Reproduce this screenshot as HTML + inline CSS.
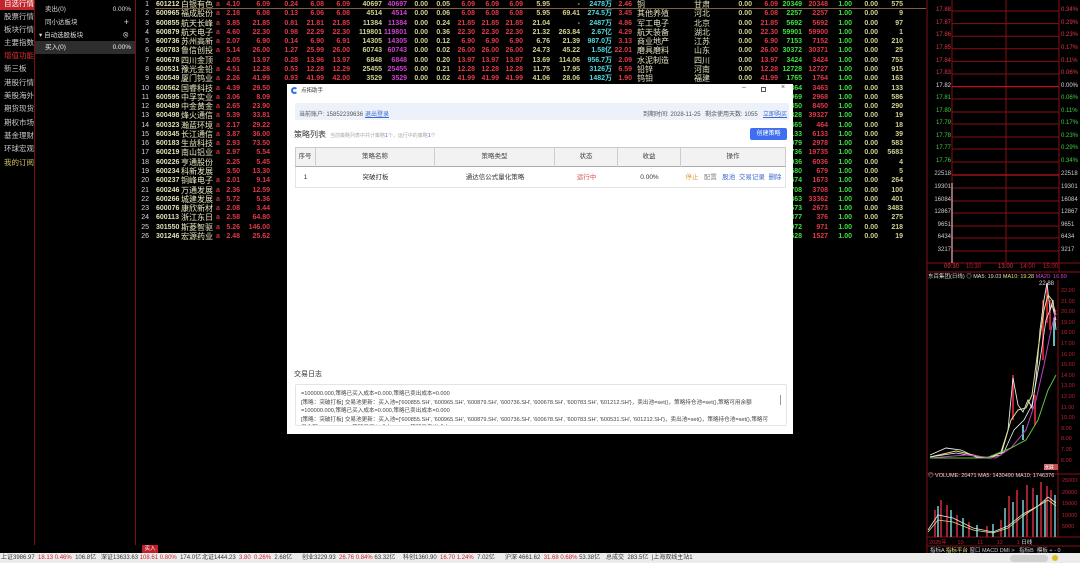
<!DOCTYPE html>
<html><head><meta charset="utf-8"><style>
*{margin:0;padding:0;box-sizing:border-box}
body{width:1080px;height:563px;background:#000;overflow:hidden;position:relative;font-family:"Liberation Sans","Noto Sans CJK SC",sans-serif;}
.a{position:absolute;white-space:nowrap}
.side div{position:absolute;left:0;width:35px;height:13px;font-size:7.5px;line-height:13px;color:#c8c8c8;padding-left:4px}
.r{position:absolute;left:0;width:926px;height:9px;font:bold 7px/9px "Liberation Sans","Noto Sans CJK SC",sans-serif;color:#d0d090}
.r span{position:absolute;text-align:right}
.r .n{left:136px;width:13px;color:#d8d8d8;font-weight:normal}
.r .cd{left:156px;width:26px;text-align:left;color:#e0e0b0}
.r .nm{left:181px;width:34px;text-align:left;color:#e8e8c0;font-weight:normal;font-size:8px}
.r .f{left:216px;width:5px;color:#d03040;text-align:left}
.rd{color:#e03848}.pu{color:#d040d0}.cy{color:#50d8e0}.gr{color:#40e040}.wh{color:#d8d8d8}
.r .k1{left:222px;width:18px}.r .k2{left:245px;width:25px}.r .k3{left:276px;width:22px}.r .k4{left:300px;width:24px}.r .k5{left:326px;width:24px}
.r .k6{left:355px;width:27px}.r .k7{left:382px;width:25px}.r .k8{left:408px;width:20px}.r .k9{left:430px;width:20px}
.r .k10{left:452px;width:23px}.r .k11{left:476px;width:23px}.r .k12{left:500px;width:23px}.r .k13{left:526px;width:24px}
.r .k14{left:553px;width:27px}.r .k15{left:582px;width:30px}.r .k16{left:612px;width:20px}
.r .k17{left:637px;width:50px;text-align:left;color:#e0e0c0;font-weight:normal;font-size:8px}
.r .k18{left:694px;width:30px;text-align:left;color:#e0e0c0;font-weight:normal;font-size:8px}
.r .k19{left:732px;width:20px}.r .k20{left:755px;width:23px}.r .k21{left:778px;width:24px}.r .k22{left:803px;width:25px}
.r .k23{left:832px;width:20px}.r .k24{left:858px;width:20px}.r .k25{left:880px;width:23px}
.dlg{position:absolute;left:287px;top:84px;width:506px;height:350px;background:#fff;font-size:6px;color:#333;z-index:5}
.th{position:absolute;top:63px;height:20px;line-height:20px;text-align:center;border-right:1px solid #ccc;font-size:6.5px;color:#444}
.td{position:absolute;top:83px;height:21px;line-height:21px;text-align:center;font-size:6.5px;color:#333}
.pl{position:absolute;left:929px;width:22px;text-align:right;font-size:6px;font-family:"Liberation Sans",sans-serif}
.pr{position:absolute;left:1061px;font-size:6px}
.st{position:absolute;top:553px;font-size:6px;line-height:10px;color:#333}
</style></head><body>

<div class="side">
<div style="top:-3px;background:#c0262c;color:#fff">自选行情</div>
<div style="top:10px">股票行情</div>
<div style="top:23px">板块行情</div>
<div style="top:36px">主要指数</div>
<div style="top:49px;color:#e03030">增值功能</div>
<div style="top:62px">新三板</div>
<div style="top:76px">港股行情</div>
<div style="top:89px">美股海外</div>
<div style="top:102px">期货现货</div>
<div style="top:116px">期权市场</div>
<div style="top:129px">基金理财</div>
<div style="top:142px">环球宏观</div>
<div style="top:156px;color:#d0c060">我的订阅</div>
</div>
<div class="a" style="left:34px;top:0;width:1px;height:545px;background:#7a1010"></div>
<div class="a" style="left:135px;top:0;width:1px;height:545px;background:#7a1010"></div>
<div class="a" style="left:35px;top:3px;width:100px;height:13px;font-size:6.5px;line-height:13px;color:#ddd;padding-left:10px">卖出(0)<span style="position:absolute;right:4px">0.00%</span></div>
<div class="a" style="left:35px;top:16px;width:100px;height:13px;font-size:6.5px;line-height:13px;color:#ddd;padding-left:10px">同小达板块<span style="position:absolute;right:6px;font-size:9px">+</span></div>
<div class="a" style="left:35px;top:29px;width:100px;height:13px;font-size:6.5px;line-height:13px;color:#ddd;padding-left:4px">▾ 自动选股板块<span style="position:absolute;right:6px">⊗</span></div>
<div class="a" style="left:35px;top:41px;width:100px;height:13px;font-size:6.5px;line-height:13px;color:#eee;padding-left:10px;background:#2e2e30">买入(0)<span style="position:absolute;right:4px">0.00%</span></div>

<div class="a" style="left:155px;top:8px;width:771px;height:1px;background:#806040"></div>
<div class="r" style="top:0"><span class="n">1</span><span class="cd">601212</span><span class="nm">白银有色</span><span class="f">a</span><span class="k1 rd">4.10</span><span class="k2 rd">6.09</span><span class="k3 rd">0.24</span><span class="k4 rd">6.08</span><span class="k5 rd">6.09</span><span class="k6">40697</span><span class="k7 pu">40697</span><span class="k8">0.00</span><span class="k9">0.05</span><span class="k10 rd">6.09</span><span class="k11 rd">6.09</span><span class="k12 rd">6.09</span><span class="k13">5.95</span><span class="k14">-</span><span class="k15 cy">2478万</span><span class="k16 rd">2.46</span><span class="k17">铜</span><span class="k18">甘肃</span><span class="k19">0.00</span><span class="k20 rd">6.09</span><span class="k21 gr">20349</span><span class="k22 rd">20348</span><span class="k23 gr">1.00</span><span class="k24">0.00</span><span class="k25">575</span></div>
<div class="r" style="top:9px"><span class="n">2</span><span class="cd">600965</span><span class="nm">福成股份</span><span class="f">a</span><span class="k1 rd">2.18</span><span class="k2 rd">6.08</span><span class="k3 rd">0.13</span><span class="k4 rd">6.06</span><span class="k5 rd">6.08</span><span class="k6">4514</span><span class="k7 pu">4514</span><span class="k8">0.00</span><span class="k9">0.06</span><span class="k10 rd">6.08</span><span class="k11 rd">6.08</span><span class="k12 rd">6.08</span><span class="k13">5.95</span><span class="k14">69.41</span><span class="k15 cy">274.5万</span><span class="k16 rd">3.45</span><span class="k17">其他养殖</span><span class="k18">河北</span><span class="k19">0.00</span><span class="k20 rd">6.08</span><span class="k21 gr">2257</span><span class="k22 rd">2257</span><span class="k23 gr">1.00</span><span class="k24">0.00</span><span class="k25">9</span></div>
<div class="r" style="top:19px"><span class="n">3</span><span class="cd">600855</span><span class="nm">航天长峰</span><span class="f">a</span><span class="k1 rd">3.85</span><span class="k2 rd">21.85</span><span class="k3 rd">0.81</span><span class="k4 rd">21.81</span><span class="k5 rd">21.85</span><span class="k6">11384</span><span class="k7 pu">11384</span><span class="k8">0.00</span><span class="k9">0.24</span><span class="k10 rd">21.85</span><span class="k11 rd">21.85</span><span class="k12 rd">21.85</span><span class="k13">21.04</span><span class="k14">-</span><span class="k15 cy">2487万</span><span class="k16 rd">4.86</span><span class="k17">军工电子</span><span class="k18">北京</span><span class="k19">0.00</span><span class="k20 rd">21.85</span><span class="k21 gr">5692</span><span class="k22 rd">5692</span><span class="k23 gr">1.00</span><span class="k24">0.00</span><span class="k25">97</span></div>
<div class="r" style="top:28px"><span class="n">4</span><span class="cd">600879</span><span class="nm">航天电子</span><span class="f">a</span><span class="k1 rd">4.60</span><span class="k2 rd">22.30</span><span class="k3 rd">0.98</span><span class="k4 rd">22.29</span><span class="k5 rd">22.30</span><span class="k6">119801</span><span class="k7 pu">119801</span><span class="k8">0.00</span><span class="k9">0.36</span><span class="k10 rd">22.30</span><span class="k11 rd">22.30</span><span class="k12 rd">22.30</span><span class="k13">21.32</span><span class="k14">263.84</span><span class="k15 cy">2.67亿</span><span class="k16 rd">4.29</span><span class="k17">航天装备</span><span class="k18">湖北</span><span class="k19">0.00</span><span class="k20 rd">22.30</span><span class="k21 gr">59901</span><span class="k22 rd">59900</span><span class="k23 gr">1.00</span><span class="k24">0.00</span><span class="k25">1</span></div>
<div class="r" style="top:37px"><span class="n">5</span><span class="cd">600736</span><span class="nm">苏州高新</span><span class="f">a</span><span class="k1 rd">2.07</span><span class="k2 rd">6.90</span><span class="k3 rd">0.14</span><span class="k4 rd">6.90</span><span class="k5 rd">6.91</span><span class="k6">14305</span><span class="k7 pu">14305</span><span class="k8">0.00</span><span class="k9">0.12</span><span class="k10 rd">6.90</span><span class="k11 rd">6.90</span><span class="k12 rd">6.90</span><span class="k13">6.76</span><span class="k14">21.39</span><span class="k15 cy">987.0万</span><span class="k16 rd">3.13</span><span class="k17">商业地产</span><span class="k18">江苏</span><span class="k19">0.00</span><span class="k20 rd">6.90</span><span class="k21 gr">7153</span><span class="k22 rd">7152</span><span class="k23 gr">1.00</span><span class="k24">0.00</span><span class="k25">210</span></div>
<div class="r" style="top:46px"><span class="n">6</span><span class="cd">600783</span><span class="nm">鲁信创投</span><span class="f">a</span><span class="k1 rd">5.14</span><span class="k2 rd">26.00</span><span class="k3 rd">1.27</span><span class="k4 rd">25.99</span><span class="k5 rd">26.00</span><span class="k6">60743</span><span class="k7 pu">60743</span><span class="k8">0.00</span><span class="k9">0.02</span><span class="k10 rd">26.00</span><span class="k11 rd">26.00</span><span class="k12 rd">26.00</span><span class="k13">24.73</span><span class="k14">45.22</span><span class="k15 cy">1.58亿</span><span class="k16 rd">22.01</span><span class="k17">磨具磨料</span><span class="k18">山东</span><span class="k19">0.00</span><span class="k20 rd">26.00</span><span class="k21 gr">30372</span><span class="k22 rd">30371</span><span class="k23 gr">1.00</span><span class="k24">0.00</span><span class="k25">25</span></div>
<div class="r" style="top:56px"><span class="n">7</span><span class="cd">600678</span><span class="nm">四川金顶</span><span class="k1 rd">2.05</span><span class="k2 rd">13.97</span><span class="k3 rd">0.28</span><span class="k4 rd">13.96</span><span class="k5 rd">13.97</span><span class="k6">6848</span><span class="k7 pu">6848</span><span class="k8">0.00</span><span class="k9">0.20</span><span class="k10 rd">13.97</span><span class="k11 rd">13.97</span><span class="k12 rd">13.97</span><span class="k13">13.69</span><span class="k14">114.06</span><span class="k15 cy">956.7万</span><span class="k16 rd">2.09</span><span class="k17">水泥制造</span><span class="k18">四川</span><span class="k19">0.00</span><span class="k20 rd">13.97</span><span class="k21 gr">3424</span><span class="k22 rd">3424</span><span class="k23 gr">1.00</span><span class="k24">0.00</span><span class="k25">753</span></div>
<div class="r" style="top:65px"><span class="n">8</span><span class="cd">600531</span><span class="nm">豫光金铅</span><span class="f">a</span><span class="k1 rd">4.51</span><span class="k2 rd">12.28</span><span class="k3 rd">0.53</span><span class="k4 rd">12.28</span><span class="k5 rd">12.29</span><span class="k6">25455</span><span class="k7 pu">25455</span><span class="k8">0.00</span><span class="k9">0.21</span><span class="k10 rd">12.28</span><span class="k11 rd">12.28</span><span class="k12 rd">12.28</span><span class="k13">11.75</span><span class="k14">17.95</span><span class="k15 cy">3126万</span><span class="k16 rd">6.59</span><span class="k17">铅锌</span><span class="k18">河南</span><span class="k19">0.00</span><span class="k20 rd">12.28</span><span class="k21 gr">12728</span><span class="k22 rd">12727</span><span class="k23 gr">1.00</span><span class="k24">0.00</span><span class="k25">915</span></div>
<div class="r" style="top:74px"><span class="n">9</span><span class="cd">600549</span><span class="nm">厦门钨业</span><span class="f">a</span><span class="k1 rd">2.26</span><span class="k2 rd">41.99</span><span class="k3 rd">0.93</span><span class="k4 rd">41.99</span><span class="k5 rd">42.00</span><span class="k6">3529</span><span class="k7 pu">3529</span><span class="k8">0.00</span><span class="k9">0.02</span><span class="k10 rd">41.99</span><span class="k11 rd">41.99</span><span class="k12 rd">41.99</span><span class="k13">41.06</span><span class="k14">28.06</span><span class="k15 cy">1482万</span><span class="k16 rd">1.90</span><span class="k17">钨钼</span><span class="k18">福建</span><span class="k19">0.00</span><span class="k20 rd">41.99</span><span class="k21 gr">1765</span><span class="k22 rd">1764</span><span class="k23 gr">1.00</span><span class="k24">0.00</span><span class="k25">163</span></div>
<div class="r" style="top:84px"><span class="n">10</span><span class="cd">600562</span><span class="nm">国睿科技</span><span class="f">a</span><span class="k1 rd">4.39</span><span class="k2 rd">29.50</span><span class="k21 gr">1864</span><span class="k22 rd">3463</span><span class="k23 gr">1.00</span><span class="k24">0.00</span><span class="k25">133</span></div>
<div class="r" style="top:93px"><span class="n">11</span><span class="cd">600595</span><span class="nm">中孚实业</span><span class="f">a</span><span class="k1 rd">3.06</span><span class="k2 rd">8.09</span><span class="k21 gr">2969</span><span class="k22 rd">2968</span><span class="k23 gr">1.00</span><span class="k24">0.00</span><span class="k25">586</span></div>
<div class="r" style="top:102px"><span class="n">12</span><span class="cd">600489</span><span class="nm">中金黄金</span><span class="f">a</span><span class="k1 rd">2.65</span><span class="k2 rd">23.90</span><span class="k21 gr">8450</span><span class="k22 rd">8450</span><span class="k23 gr">1.00</span><span class="k24">0.00</span><span class="k25">290</span></div>
<div class="r" style="top:111px"><span class="n">13</span><span class="cd">600498</span><span class="nm">烽火通信</span><span class="f">a</span><span class="k1 rd">5.39</span><span class="k2 rd">33.81</span><span class="k21 gr">39328</span><span class="k22 rd">39327</span><span class="k23 gr">1.00</span><span class="k24">0.00</span><span class="k25">19</span></div>
<div class="r" style="top:121px"><span class="n">14</span><span class="cd">600323</span><span class="nm">瀚蓝环境</span><span class="f">a</span><span class="k1 rd">2.17</span><span class="k2 rd">29.22</span><span class="k21 gr">465</span><span class="k22 rd">464</span><span class="k23 gr">1.00</span><span class="k24">0.00</span><span class="k25">18</span></div>
<div class="r" style="top:130px"><span class="n">15</span><span class="cd">600345</span><span class="nm">长江通信</span><span class="f">a</span><span class="k1 rd">3.87</span><span class="k2 rd">36.00</span><span class="k21 gr">6133</span><span class="k22 rd">6133</span><span class="k23 gr">1.00</span><span class="k24">0.00</span><span class="k25">39</span></div>
<div class="r" style="top:139px"><span class="n">16</span><span class="cd">600183</span><span class="nm">生益科技</span><span class="f">a</span><span class="k1 rd">2.93</span><span class="k2 rd">73.50</span><span class="k21 gr">2979</span><span class="k22 rd">2978</span><span class="k23 gr">1.00</span><span class="k24">0.00</span><span class="k25">583</span></div>
<div class="r" style="top:148px"><span class="n">17</span><span class="cd">600219</span><span class="nm">南山铝业</span><span class="f">a</span><span class="k1 rd">2.97</span><span class="k2 rd">5.54</span><span class="k21 gr">19736</span><span class="k22 rd">19735</span><span class="k23 gr">1.00</span><span class="k24">0.00</span><span class="k25">5683</span></div>
<div class="r" style="top:158px"><span class="n">18</span><span class="cd">600226</span><span class="nm">亨通股份</span><span class="k1 rd">2.25</span><span class="k2 rd">5.45</span><span class="k21 gr">6036</span><span class="k22 rd">6036</span><span class="k23 gr">1.00</span><span class="k24">0.00</span><span class="k25">4</span></div>
<div class="r" style="top:167px"><span class="n">19</span><span class="cd">600234</span><span class="nm">科新发展</span><span class="k1 rd">3.50</span><span class="k2 rd">13.30</span><span class="k21 gr">680</span><span class="k22 rd">679</span><span class="k23 gr">1.00</span><span class="k24">0.00</span><span class="k25">5</span></div>
<div class="r" style="top:176px"><span class="n">20</span><span class="cd">600237</span><span class="nm">铜峰电子</span><span class="f">a</span><span class="k1 rd">2.01</span><span class="k2 rd">9.14</span><span class="k21 gr">1674</span><span class="k22 rd">1673</span><span class="k23 gr">1.00</span><span class="k24">0.00</span><span class="k25">264</span></div>
<div class="r" style="top:186px"><span class="n">21</span><span class="cd">600246</span><span class="nm">万通发展</span><span class="f">a</span><span class="k1 rd">2.36</span><span class="k2 rd">12.59</span><span class="k21 gr">3708</span><span class="k22 rd">3708</span><span class="k23 gr">1.00</span><span class="k24">0.00</span><span class="k25">100</span></div>
<div class="r" style="top:195px"><span class="n">22</span><span class="cd">600266</span><span class="nm">城建发展</span><span class="f">a</span><span class="k1 rd">5.72</span><span class="k2 rd">5.36</span><span class="k21 gr">33363</span><span class="k22 rd">33362</span><span class="k23 gr">1.00</span><span class="k24">0.00</span><span class="k25">401</span></div>
<div class="r" style="top:204px"><span class="n">23</span><span class="cd">600076</span><span class="nm">康欣新材</span><span class="f">a</span><span class="k1 rd">2.08</span><span class="k2 rd">3.44</span><span class="k21 gr">2673</span><span class="k22 rd">2673</span><span class="k23 gr">1.00</span><span class="k24">0.00</span><span class="k25">3483</span></div>
<div class="r" style="top:213px"><span class="n">24</span><span class="cd">600113</span><span class="nm">浙江东日</span><span class="f">a</span><span class="k1 rd">2.58</span><span class="k2 rd">64.80</span><span class="k21 gr">377</span><span class="k22 rd">376</span><span class="k23 gr">1.00</span><span class="k24">0.00</span><span class="k25">275</span></div>
<div class="r" style="top:223px"><span class="n">25</span><span class="cd">301550</span><span class="nm">斯菱智驱</span><span class="f">a</span><span class="k1 rd">5.26</span><span class="k2 rd">146.00</span><span class="k21 gr">972</span><span class="k22 rd">971</span><span class="k23 gr">1.00</span><span class="k24">0.00</span><span class="k25">218</span></div>
<div class="r" style="top:232px"><span class="n">26</span><span class="cd">301246</span><span class="nm">宏源药业</span><span class="f">a</span><span class="k1 rd">2.48</span><span class="k2 rd">25.62</span><span class="k21 gr">1528</span><span class="k22 rd">1527</span><span class="k23 gr">1.00</span><span class="k24">0.00</span><span class="k25">19</span></div>

<div class="dlg">
 <div class="a" style="left:4px;top:3px;width:7px;height:7px;border-radius:50%;border:2px solid #2f6fe0;border-right-color:transparent"></div>
 <div class="a" style="left:14px;top:2px;font-size:5.5px">点拓助手</div>
 <div class="a" style="left:455px;top:0;font-size:7px;color:#555">–</div>
 <div class="a" style="left:474px;top:3px;width:5px;height:5px;border:1px solid #555"></div>
 <div class="a" style="left:494px;top:0;font-size:7px;color:#555">×</div>
 <div class="a" style="left:8px;top:19px;width:494px;height:17px;background:#edf2fa"></div>
 <div class="a" style="left:12px;top:25px;color:#555">当前账户: 15852239636</div>
 <div class="a" style="left:78px;top:25px;color:#3a6ad0;text-decoration:underline">退出登录</div>
 <div class="a" style="left:356px;top:25px;color:#555">到期时间: 2028-11-25</div>
 <div class="a" style="left:418px;top:25px;color:#555">剩余使用天数: 1055</div>
 <div class="a" style="left:476px;top:25px;color:#3a6ad0;text-decoration:underline">立即购买</div>
 <div class="a" style="left:7px;top:45px;font-size:8px;color:#333">策略列表</div>
 <div class="a" style="left:43px;top:48px;font-size:5px;color:#aaa">当前策略列表中共计策略<span style="color:#3a6ad0">1</span>个，运行中的策略<span style="color:#3a6ad0">1</span>个</div>
 <div class="a" style="left:463px;top:44px;width:37px;height:12px;background:#3f6ff0;border-radius:2px;color:#fff;font-size:6px;line-height:12px;text-align:center">创建策略</div>
 <div class="a" style="left:8px;top:63px;width:491px;height:20px;background:#f2f2f2;border:1px solid #ccc;border-bottom:1px solid #aaa"></div>
 <div class="th" style="left:8px;width:21px">序号</div>
 <div class="th" style="left:29px;width:119px">策略名称</div>
 <div class="th" style="left:148px;width:120px">策略类型</div>
 <div class="th" style="left:268px;width:63px">状态</div>
 <div class="th" style="left:331px;width:63px">收益</div>
 <div class="th" style="left:394px;width:105px;border-right:1px solid #ccc">操作</div>
 <div class="a" style="left:8px;top:83px;width:491px;height:21px;border:1px solid #e4e4e4;border-top:none"></div>
 <div class="td" style="left:8px;width:21px">1</div>
 <div class="td" style="left:29px;width:119px">突破打板</div>
 <div class="td" style="left:148px;width:120px">通达信公式量化策略</div>
 <div class="td" style="left:268px;width:63px;color:#e05050">运行中</div>
 <div class="td" style="left:331px;width:63px">0.00%</div>
 <div class="td" style="left:394px;width:105px"><span style="color:#e0a040">停止</span>&nbsp;&nbsp;&nbsp;<span style="color:#888">配置</span>&nbsp;&nbsp;&nbsp;<span style="color:#3a6ad0">股池</span>&nbsp;&nbsp;<span style="color:#3a6ad0">交易记录</span>&nbsp;&nbsp;<span style="color:#3a6ad0">删除</span></div>
 <div class="a" style="left:7px;top:285px;font-size:7px;color:#333">交易日志</div>
 <div class="a" style="left:8px;top:300px;width:492px;height:42px;border:1px solid #e4e4e4;border-radius:2px;overflow:hidden">
  <div style="position:absolute;left:5px;top:5px;width:470px;font-size:5.6px;line-height:8.5px;color:#444;white-space:normal">=100000.000,策略已买入成本=0.000,策略已卖出成本=0.000<br>[策略：突破打板] 交易池更新：买入池={'600855.SH', '600965.SH', '600879.SH', '600736.SH', '600678.SH', '600783.SH', '601212.SH'}，卖出池=set()，策略持仓池=set(),策略可用余额=100000.000,策略已买入成本=0.000,策略已卖出成本=0.000<br>[策略：突破打板] 交易池更新：买入池={'600855.SH', '600965.SH', '600879.SH', '600736.SH', '600678.SH', '600783.SH', '600531.SH', '601212.SH'}，卖出池=set()，策略持仓池=set(),策略可用余额=100000.000,策略已买入成本=0.000,策略已卖出成本=0.000</div>
  <div style="position:absolute;right:5px;top:10px;width:1px;height:10px;background:#999"></div>
 </div>
</div>

<svg class="a" style="left:926px;top:0" width="154" height="553">
 <g stroke="#8a0f14" stroke-width="1" fill="none">
  <line x1="26" y1="0" x2="26" y2="263"/><line x1="80" y1="0" x2="80" y2="263"/><line x1="133" y1="0" x2="133" y2="272"/>
  <line x1="1" y1="0" x2="1" y2="553"/>
  <line x1="26" y1="11" x2="133" y2="11"/><line x1="26" y1="23.6" x2="133" y2="23.6"/><line x1="26" y1="36.2" x2="133" y2="36.2"/><line x1="26" y1="48.8" x2="133" y2="48.8"/><line x1="26" y1="61.4" x2="133" y2="61.4"/><line x1="26" y1="74" x2="133" y2="74"/>
  <line x1="26" y1="99" x2="133" y2="99"/><line x1="26" y1="112" x2="133" y2="112"/><line x1="26" y1="124" x2="133" y2="124"/><line x1="26" y1="137" x2="133" y2="137"/><line x1="26" y1="149" x2="133" y2="149"/><line x1="26" y1="162" x2="133" y2="162"/>
  <line x1="26" y1="188" x2="133" y2="188"/><line x1="26" y1="201" x2="133" y2="201"/><line x1="26" y1="213" x2="133" y2="213"/><line x1="26" y1="226" x2="133" y2="226"/><line x1="26" y1="238" x2="133" y2="238"/><line x1="26" y1="251" x2="133" y2="251"/>
  <line x1="1" y1="263" x2="154" y2="263"/><line x1="1" y1="272" x2="154" y2="272"/>
  <line x1="132" y1="280" x2="132" y2="537"/><line x1="1" y1="474" x2="154" y2="474"/><line x1="1" y1="537" x2="154" y2="537"/><line x1="1" y1="546" x2="154" y2="546"/>
 </g>
 <g stroke="#c0141c" stroke-width="1.3"><line x1="26" y1="86.6" x2="133" y2="86.6"/><line x1="26" y1="175" x2="133" y2="175"/></g>
 <line x1="26" y1="183" x2="26" y2="263" stroke="#f0b0c0" stroke-width="1.2"/>
 <g fill="#c02030"><rect x="86" y="375" width="2" height="45"/><rect x="108" y="395" width="2" height="30"/><rect x="116" y="300" width="2" height="60"/><rect x="120" y="283" width="2" height="40"/><rect x="123" y="300" width="2" height="30"/></g>
 <g fill="#60c0c0"><rect x="127" y="318" width="2" height="28"/><rect x="96" y="425" width="2" height="15"/></g>
 <path d="M4 455 L20 448 L35 450 L50 457 L65 458 L75 452 L82 430 L87 378 L92 405 L97 412 L102 400 L106 408 L110 380 L114 330 L118 300 L121 283 L124 310 L127 300 L130 330" stroke="#e8e8e8" fill="none" stroke-width=".9"/>
 <path d="M4 457 L30 451 L60 458 L75 455 L85 420 L92 410 L100 408 L106 395 L112 350 L118 310 L122 295 L126 300 L130 315" stroke="#e0e080" fill="none"/>
 <path d="M4 457 L30 453 L60 458 L78 452 L88 430 L98 420 L106 405 L114 360 L120 320 L126 305 L130 320" stroke="#f0f0f0" fill="none" stroke-width=".8"/>
 <path d="M4 458 L40 455 L70 458 L85 448 L100 430 L110 400 L118 365 L125 330 L130 310" stroke="#c040c0" fill="none"/>
 <path d="M4 458 L60 458 L85 448 L100 440 L112 420 L122 390 L130 375" stroke="#60c040" fill="none"/>
 <text x="113" y="285" font-size="6" fill="#ddd" font-family="Liberation Sans">22.88</text>
 <g fill="#a02030">
  <rect x="8" y="510" width="2" height="27"/><rect x="14" y="500" width="2" height="37"/><rect x="20" y="505" width="2" height="32"/><rect x="30" y="515" width="2" height="22"/><rect x="42" y="522" width="2" height="15"/><rect x="60" y="526" width="2" height="11"/><rect x="74" y="520" width="2" height="17"/><rect x="82" y="496" width="2" height="41"/><rect x="90" y="490" width="2" height="47"/><rect x="100" y="485" width="2" height="52"/><rect x="106" y="488" width="2" height="49"/><rect x="114" y="482" width="2" height="55"/><rect x="120" y="486" width="2" height="51"/><rect x="124" y="490" width="2" height="47"/>
 </g>
 <g fill="#5a9aa0">
  <rect x="11" y="506" width="2" height="31"/><rect x="24" y="510" width="2" height="27"/><rect x="36" y="518" width="2" height="19"/><rect x="50" y="525" width="2" height="12"/><rect x="66" y="524" width="2" height="13"/><rect x="78" y="508" width="2" height="29"/><rect x="86" y="502" width="2" height="35"/><rect x="96" y="500" width="2" height="37"/><rect x="110" y="495" width="2" height="42"/><rect x="118" y="500" width="2" height="37"/><rect x="128" y="495" width="2" height="42"/>
 </g>
 <path d="M2 530 L12 515 L27 518 L47 528 L67 532 L82 526 L97 514 L112 506 L122 497 L130 503" stroke="#e8e8e8" fill="none" stroke-width=".8"/>
 <path d="M2 532 L12 520 L27 522 L47 530 L67 533 L82 528 L97 516 L112 506 L122 500 L130 506" stroke="#e0e080" fill="none" stroke-width=".8"/>
</svg>
<div class="pl" style="top:7px;color:#e03848">17.88</div><div class="pl" style="top:20px;color:#e03848">17.87</div><div class="pl" style="top:32px;color:#e03848">17.86</div><div class="pl" style="top:45px;color:#e03848">17.85</div><div class="pl" style="top:58px;color:#e03848">17.84</div><div class="pl" style="top:70px;color:#e03848">17.83</div><div class="pl" style="top:83px;color:#ddd">17.82</div><div class="pl" style="top:95px;color:#40d040">17.81</div><div class="pl" style="top:108px;color:#40d040">17.80</div><div class="pl" style="top:120px;color:#40d040">17.79</div><div class="pl" style="top:133px;color:#40d040">17.78</div><div class="pl" style="top:145px;color:#40d040">17.77</div><div class="pl" style="top:158px;color:#40d040">17.76</div>
<div class="pl" style="top:171px;color:#ccc">22518</div><div class="pl" style="top:184px;color:#ccc">19301</div><div class="pl" style="top:197px;color:#ccc">16084</div><div class="pl" style="top:209px;color:#ccc">12867</div><div class="pl" style="top:222px;color:#ccc">9651</div><div class="pl" style="top:234px;color:#ccc">6434</div><div class="pl" style="top:247px;color:#ccc">3217</div>
<div class="pr" style="top:7px;color:#e03848">0.34%</div><div class="pr" style="top:20px;color:#e03848">0.29%</div><div class="pr" style="top:32px;color:#e03848">0.23%</div><div class="pr" style="top:45px;color:#e03848">0.17%</div><div class="pr" style="top:58px;color:#e03848">0.11%</div><div class="pr" style="top:70px;color:#e03848">0.06%</div><div class="pr" style="top:83px;color:#ddd">0.00%</div><div class="pr" style="top:95px;color:#40d040">0.06%</div><div class="pr" style="top:108px;color:#40d040">0.11%</div><div class="pr" style="top:120px;color:#40d040">0.17%</div><div class="pr" style="top:133px;color:#40d040">0.23%</div><div class="pr" style="top:145px;color:#40d040">0.29%</div><div class="pr" style="top:158px;color:#40d040">0.34%</div>
<div class="pr" style="top:171px;color:#ccc">22518</div><div class="pr" style="top:184px;color:#ccc">19301</div><div class="pr" style="top:197px;color:#ccc">16084</div><div class="pr" style="top:209px;color:#ccc">12867</div><div class="pr" style="top:222px;color:#ccc">9651</div><div class="pr" style="top:234px;color:#ccc">6434</div><div class="pr" style="top:247px;color:#ccc">3217</div>
<div class="a" style="left:944px;top:264px;font-size:6px;color:#e03848">09:30</div><div class="a" style="left:966px;top:264px;font-size:6px;color:#c02030">10:30</div><div class="a" style="left:998px;top:264px;font-size:6px;color:#e03848">13:00</div><div class="a" style="left:1020px;top:264px;font-size:6px;color:#c02030">14:00</div><div class="a" style="left:1043px;top:264px;font-size:6px;color:#c02030">15:00</div>
<div class="a" style="left:928px;top:272px;font-size:5.5px;color:#ddd">东百集团(日线) ◎ MA5: 19.03 <span style="color:#e0e080">MA10: 19.28</span> <span style="color:#d040d0">MA20: 16.89</span></div>
<div class="a" style="left:928px;top:471px;font-size:5.5px;color:#ddd">◎ VOLUME: 20471 MA5: 1430490 MA10: 1746376</div>
<div class="a" style="left:1061px;top:286px;font-size:5.5px;color:#c02030;line-height:10.6px">22.00<br>21.00<br>20.00<br>19.00<br>18.00<br>17.00<br>16.00<br>15.00<br>14.00<br>13.00<br>12.00<br>11.00<br>10.00<br>9.00<br>8.00<br>7.00<br>6.00</div>
<div class="a" style="left:1062px;top:476px;font-size:5.5px;color:#c02030;line-height:11.5px">25000<br>20000<br>15000<br>10000<br>5000</div>
<div class="a" style="left:929px;top:538px;font-size:5.5px;color:#c02030">2025年 &nbsp;&nbsp;&nbsp;&nbsp;&nbsp; 10 &nbsp;&nbsp;&nbsp;&nbsp;&nbsp;&nbsp;&nbsp; 11 &nbsp;&nbsp;&nbsp;&nbsp;&nbsp;&nbsp;&nbsp; 12 &nbsp;&nbsp;&nbsp;&nbsp;&nbsp;&nbsp;&nbsp; 1 <span style="color:#ddd">日线</span></div>
<div class="a" style="left:930px;top:546px;font-size:5.5px;color:#ccc">指标A <span style="color:#e0e080">指标平台</span> 窗口 MACD DMI &gt; &nbsp; 指标B &nbsp;模板 + - 0</div>
<div class="a" style="left:1044px;top:464px;width:14px;height:6px;background:#c05050;font-size:5px;color:#fff">涨跌</div>

<div class="a" style="left:142px;top:545px;width:16px;height:8px;background:#c0202a;color:#fff;font-size:5.5px;line-height:8px;text-align:center">买入</div>
<div class="a" style="left:0;top:553px;width:1080px;height:10px;background:#ececec"></div>
<div class="st" style="left:1px">上证3986.97 &nbsp;<span style="color:#d02030">18.13 0.46%</span> &nbsp;106.8亿</div>
<div class="st" style="left:101px">深证13633.63 <span style="color:#d02030">108.61 0.80%</span> &nbsp;174.0亿</div>
<div class="st" style="left:202px">北证1444.23 &nbsp;<span style="color:#d02030">3.80 &nbsp;0.26%</span> &nbsp;2.68亿</div>
<div class="st" style="left:302px">创业3229.93 &nbsp;<span style="color:#d02030">26.76 0.84%</span> 63.32亿</div>
<div class="st" style="left:403px">科创1360.90 &nbsp;<span style="color:#d02030">16.70 1.24%</span> &nbsp;7.02亿</div>
<div class="st" style="left:505px">沪深 4661.62 &nbsp;<span style="color:#d02030">31.68 0.68%</span> 53.38亿</div>
<div class="st" style="left:606px">总成交 &nbsp;283.5亿 &nbsp;|上海双线主站1</div>
<div class="a" style="left:1010px;top:555px;width:38px;height:7px;background:#d0d0d0;border-radius:4px"></div>
<div class="a" style="left:1052px;top:555px;width:6px;height:6px;background:#e0c020;border-radius:50%"></div>
</body></html>
